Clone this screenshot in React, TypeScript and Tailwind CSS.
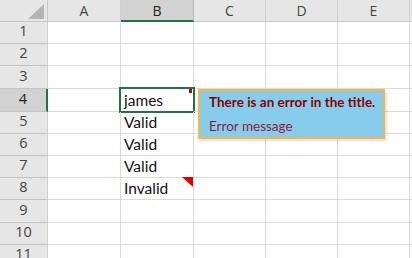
import React from "react";

const cols = [
  { label: "A", w: "w-[73px]" },
  { label: "B", w: "w-[73px]" },
  { label: "C", w: "w-[72px]" },
  { label: "D", w: "w-[72px]" },
  { label: "E", w: "w-[72px]" },
];

const rows = [
  { n: 1, h: "h-[22px]" },
  { n: 2, h: "h-[22px]" },
  { n: 3, h: "h-[23px]" },
  { n: 4, h: "h-[23px]" },
  { n: 5, h: "h-[22px]" },
  { n: 6, h: "h-[22px]" },
  { n: 7, h: "h-[22px]" },
  { n: 8, h: "h-[22px]" },
  { n: 9, h: "h-[23px]" },
  { n: 10, h: "h-[22px]" },
  { n: 11, h: "h-[22px]" },
];

const values: Record<number, string> = {
  4: "james",
  5: "Valid",
  6: "Valid",
  7: "Valid",
  8: "Invalid",
};

const App = () => {
  return (
    <div
      className="relative w-[412px] h-[258px] overflow-hidden bg-white"
      style={{ fontFamily: '"Open Sans", "Liberation Sans", sans-serif' }}
    >
      {/* column headers */}
      <div className="flex h-[22px]">
        <div className="relative w-[48px] shrink-0 bg-[#e6e6e6] border-r border-b border-[#c8c8c8]">
          <svg className="absolute right-[3px] bottom-[2px]" width="16" height="15" viewBox="0 0 16 15">
            <polygon points="16,0 16,15 0,15" fill="#b5b5b5" />
          </svg>
        </div>
        {cols.map((c) => (
          <div
            key={c.label}
            className={`${c.w} shrink-0 flex items-center justify-center text-[14px] border-r ${
              c.label === "B"
                ? "bg-[#d2d2d2] text-[#222] border-[#b8b8b8] border-b-2 border-b-[#217346]"
                : "bg-[#e6e6e6] text-[#444] border-[#d0d0d0] border-b border-b-[#c8c8c8]"
            }`}
          >
            {c.label}
          </div>
        ))}
        <div className="flex-1 bg-[#e6e6e6] border-b border-[#c8c8c8]" />
      </div>

      {rows.map((r) => (
        <div key={r.n} className={`flex ${r.h}`}>
          <div
            className={`w-[48px] shrink-0 flex items-end justify-center pb-[1px] text-[14.5px] border-b border-[#c2c2c2] ${
              r.n === 4
                ? "bg-[#d2d2d2] text-[#222] border-r-2 border-r-[#217346]"
                : "bg-[#e6e6e6] text-[#444] border-r border-r-[#d0d0d0]"
            }`}
          >
            {r.n}
          </div>
          {cols.map((c) => (
            <div
              key={c.label}
              className={`${c.w} relative shrink-0 border-r border-b border-[#dadada] text-[15.5px] text-[#111] leading-none flex items-end pb-[3px] pl-[3px]`}
              style={{ fontFamily: 'Lato, "Liberation Sans", sans-serif' }}
            >
              {c.label === "B" && values[r.n]}
              {c.label === "B" && r.n === 8 && (
                <svg className="absolute right-0 top-[-1px]" width="11" height="10" viewBox="0 0 11 10">
                  <polygon points="0,0 11,0 11,10" fill="#e00000" />
                </svg>
              )}
              {c.label === "B" && r.n === 4 && (
                <div className="absolute inset-[-2px] border-2 border-[#217346]">
                  <div className="absolute right-[1px] top-0 w-[3px] h-[4px] bg-[#c00000]" />
                </div>
              )}
            </div>
          ))}
          <div className="flex-1 border-b border-[#dadada]" />
        </div>
      ))}

      {/* error tooltip */}
      <div
        className="absolute left-[198px] top-[89px] w-[187px] h-[50px] bg-[#87cdeb] border-2 border-[#f0b84a] shadow-[2px_2px_2px_rgba(0,0,0,0.12)] pl-[9px] pt-[2px] whitespace-nowrap"
        style={{ fontFamily: 'Lato, "Liberation Sans", sans-serif' }}
      >
        <div className="text-[13.5px] font-bold text-[#8b0000] leading-[18px]">
          There is an error in the title.
        </div>
        <div className="mt-[7px] text-[13.5px] text-[#8a1c3c] leading-[16px]">Error message</div>
      </div>
    </div>
  );
};

export default App;
